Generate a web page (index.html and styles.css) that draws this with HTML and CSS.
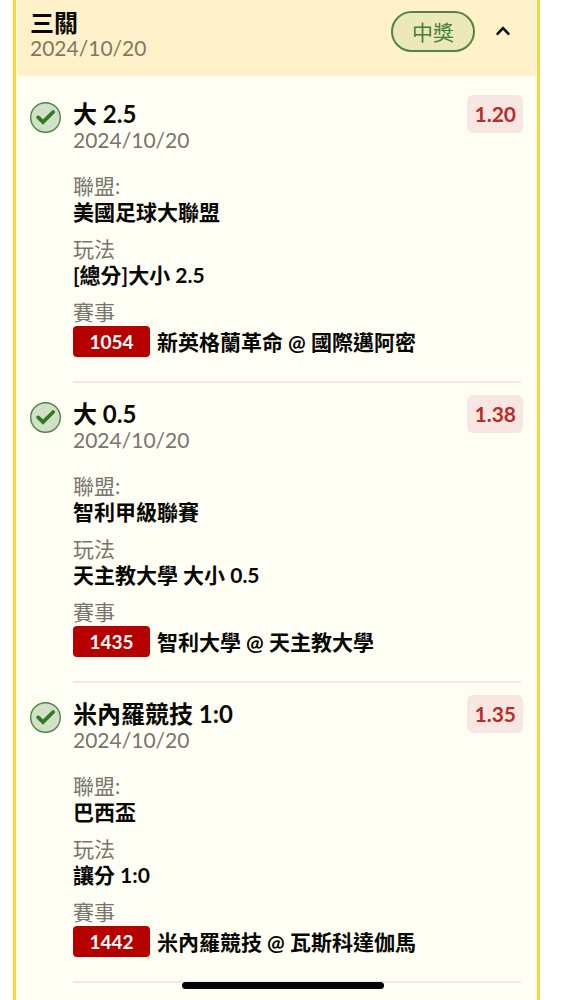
FILE: index.html
```html
<!DOCTYPE html>
<html lang="zh-Hant">
<head>
<meta charset="utf-8">
<meta name="viewport" content="width=device-width, initial-scale=1">
<title>三關</title>
<link rel="stylesheet" href="styles.css">
</head>
<body>
<svg class="symbols" aria-hidden="true">
  <symbol id="won" viewBox="0 0 31 31">
    <circle cx="15.5" cy="15.5" r="14.8" fill="#d2e0c8" stroke="#4c8643" stroke-width="1.4"/>
    <path d="M8.2 15.4 13 20 23.2 10" fill="none" stroke="#2f7a22" stroke-width="3.8" stroke-linecap="round" stroke-linejoin="miter"/>
  </symbol>
</svg>
<main class="card">
  <header class="card-header">
    <div class="heading">
      <h1 class="title">三關</h1>
      <p class="date">2024/10/20</p>
    </div>
    <span class="status">中獎</span>
    <button class="toggle" type="button" aria-label="收合" aria-expanded="true">
      <svg class="chevron" viewBox="0 0 16 10" aria-hidden="true"><path d="M1.8 8.6 8 2.2 14.2 8.6" fill="none" stroke="#111" stroke-width="2.6"/></svg>
    </button>
  </header>
  <div class="legs">
    <article class="leg">
      <svg class="mark" role="img" aria-label="中獎"><use href="#won"/></svg>
      <div class="body">
        <div class="top">
          <div class="heading">
            <h2 class="title">大 2.5</h2>
            <p class="date">2024/10/20</p>
          </div>
          <span class="odds">1.20</span>
        </div>
        <dl class="facts">
          <div><dt>聯盟:</dt><dd>美國足球大聯盟</dd></div>
          <div><dt>玩法</dt><dd>[總分]大小 2.5</dd></div>
          <div><dt>賽事</dt><dd class="match"><span class="code">1054</span><span>新英格蘭革命 @ 國際邁阿密</span></dd></div>
        </dl>
      </div>
    </article>
    <article class="leg">
      <svg class="mark" role="img" aria-label="中獎"><use href="#won"/></svg>
      <div class="body">
        <div class="top">
          <div class="heading">
            <h2 class="title">大 0.5</h2>
            <p class="date">2024/10/20</p>
          </div>
          <span class="odds">1.38</span>
        </div>
        <dl class="facts">
          <div><dt>聯盟:</dt><dd>智利甲級聯賽</dd></div>
          <div><dt>玩法</dt><dd>天主教大學 大小 0.5</dd></div>
          <div><dt>賽事</dt><dd class="match"><span class="code">1435</span><span>智利大學 @ 天主教大學</span></dd></div>
        </dl>
      </div>
    </article>
    <article class="leg">
      <svg class="mark" role="img" aria-label="中獎"><use href="#won"/></svg>
      <div class="body">
        <div class="top">
          <div class="heading">
            <h2 class="title">米內羅競技 1:0</h2>
            <p class="date">2024/10/20</p>
          </div>
          <span class="odds">1.35</span>
        </div>
        <dl class="facts">
          <div><dt>聯盟:</dt><dd>巴西盃</dd></div>
          <div><dt>玩法</dt><dd>讓分 1:0</dd></div>
          <div><dt>賽事</dt><dd class="match"><span class="code">1442</span><span>米內羅競技 @ 瓦斯科達伽馬</span></dd></div>
        </dl>
      </div>
    </article>
  </div>
</main>
<div class="home-bar"></div>
</body>
</html>
```
FILE: styles.css
```css
* { box-sizing: border-box; }
body {
  margin: 0;
  background: #fff;
  color: #080805;
  font-family: Lato, "Noto Sans CJK TC", sans-serif;
  font-size: 21px;
  line-height: 26px;
}
h1, h2, p, dl, dd { margin: 0; }
.symbols { display: block; width: 0; height: 0; }
.card {
  min-height: 100vh;
  margin: 0 25px 0 13px;
  border: solid #fbd63c;
  border-width: 0 3px;
  background: #fffef5;
}
.card-header {
  display: flex;
  align-items: flex-start;
  margin: 0 1px;
  padding: 10px 17px 16px 13px;
  background: #fff1ca;
}
.heading { flex: 1; }
.title {
  font-size: 24px;
  font-weight: 700;
}
.date { color: #77756d; }
.card-header .heading { line-height: 25px; }
.card-header .date { color: #807962; }
.status {
  margin-top: 1px;
  padding: 6px 19px;
  border: 2px solid #4f8642;
  border-radius: 21px;
  background: #ebe8b9;
  color: #468038;
}
.card-header .status { line-height: 25px; }
.toggle {
  display: flex;
  margin-left: 12px;
  padding: 16px 8px;
  border: 0;
  background: none;
}
.chevron { width: 16px; height: 10px; }
.legs { padding: 19px 14px 15px; }
.leg {
  display: flex;
  gap: 12px;
  margin-bottom: 12px;
}
.leg:last-child { margin-bottom: 0; }
.mark {
  flex: none;
  width: 31px;
  height: 31px;
  margin-top: 7px;
}
.body {
  flex: 1;
  margin-right: 2px;
  padding-bottom: 24px;
  border-bottom: 2px solid #eceae4;
}
.top {
  display: flex;
  align-items: flex-start;
  margin-right: -2px;
}
.top .heading { padding-top: 6px; }
.odds {
  padding: 6px 7px;
  border-radius: 6px;
  background: #f7e6e1;
  color: #b92d27;
  font-weight: 700;
}
.facts {
  display: grid;
  gap: 11px;
  padding-top: 20px;
}
dt { color: #77756d; }
dd { font-weight: 700; }
.match {
  display: flex;
  align-items: center;
  gap: 7px;
  margin-top: 1px;
  line-height: 31px;
}
.code {
  width: 77px;
  border-radius: 4px;
  background: #b60000;
  color: #fff;
  font-size: 19px;
  text-align: center;
}
.home-bar {
  position: fixed;
  bottom: 11px;
  left: 50%;
  width: 202px;
  height: 7px;
  border-radius: 4px;
  background: #000;
  transform: translateX(-50%);
}
```
